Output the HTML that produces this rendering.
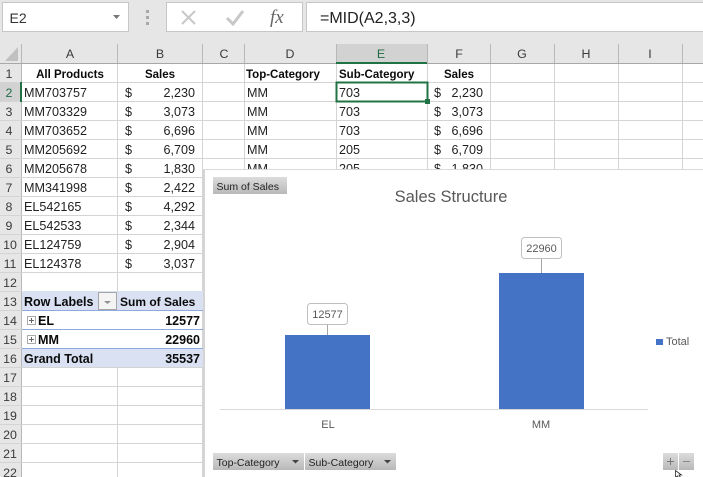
<!DOCTYPE html>
<html><head><meta charset="utf-8"><style>
html,body{margin:0;padding:0;background:#fff}
svg{display:block}
text{font-family:"Liberation Sans",sans-serif;font-size:12.6px;fill:#1f1f1f}
.b{font-weight:bold;fill:#0a0a0a}
.h{fill:#3a3a3a;font-size:12.4px}
.m{text-anchor:middle}
.r{text-anchor:end}
.c{fill:#595959;font-size:11px}
.f{font-size:10.5px;fill:#222}
</style></head><body>
<svg width="703" height="477" viewBox="0 0 703 477" xmlns="http://www.w3.org/2000/svg" shape-rendering="crispEdges">
<defs><linearGradient id="g" x1="0" y1="0" x2="0" y2="1"><stop offset="0" stop-color="#dcdcdc"/><stop offset="1" stop-color="#b8b8b8"/></linearGradient></defs>
<rect width="703" height="477" fill="#fff"/>
<rect width="703" height="64" fill="#e6e6e6"/>
<rect x="0" y="64" width="21" height="413" fill="#e6e6e6"/>
<!-- name/formula boxes -->
<rect x="2.500" y="2.500" width="126" height="29" fill="#fff" stroke="#c6c6c6"/>
<text x="9.500" y="23" style="font-size:14px;fill:#333">E2</text>
<path d="M113 15h7l-3.500 4z" fill="#777" shape-rendering="auto"/>
<rect x="146" y="10" width="3" height="3" fill="#a8a8a8"/><rect x="146" y="16" width="3" height="3" fill="#a8a8a8"/><rect x="146" y="22" width="3" height="3" fill="#a8a8a8"/>
<rect x="166.500" y="2.500" width="136" height="29" fill="#fff" stroke="#c6c6c6"/>
<path d="M182 11l13 13M195 11l-13 13" stroke="#c8c8c8" stroke-width="2" fill="none" shape-rendering="auto"/>
<path d="M227 18l6 6 10-13" stroke="#c8c8c8" stroke-width="3" fill="none" shape-rendering="auto"/>
<text x="270" y="23" style="font-family:'Liberation Serif',serif;font-style:italic;font-size:19px;fill:#666">fx</text>
<rect x="306.500" y="2.500" width="398" height="29" fill="#fff" stroke="#c6c6c6"/>
<text x="320" y="23" style="font-size:16px;fill:#222">=MID(A2,3,3)</text>
<!-- headers -->
<rect x="336" y="44" width="91" height="19" fill="#d2d2d2"/>
<rect x="0" y="82" width="21" height="20" fill="#d2d2d2"/>
<path d="M18 47v14h-13z" fill="#c0c0c0" shape-rendering="auto"/>
<path d="M21.500 44v433M117.500 44v19M202.500 44v19M244.500 44v19M336.500 44v19M427.500 44v19M490.500 44v19M554.500 44v19M618.500 44v19M682.500 44v19" stroke="#b8b8b8" fill="none"/>
<rect x="0" y="63" width="703" height="1" fill="#a8a8a8"/>
<!-- grid -->
<path d="M0 82.500H703M0 101.500H703M0 120.500H703M0 139.500H703M0 158.500H703M0 177.500H703M0 196.500H703M0 215.500H703M0 234.500H703M0 253.500H703M0 272.500H703M0 291.500H703M0 310.500H703M0 329.500H703M0 348.500H703M0 367.500H703M0 386.500H703M0 405.500H703M0 424.500H703M0 443.500H703M0 462.500H703" stroke="#d4d4d4" fill="none"/>
<path d="M117.500 64V291M117.500 367V477M202.500 64V477M244.500 64V170M336.500 64V170M427.500 64V170M490.500 64V170M554.500 64V170M618.500 64V170M682.500 64V170" stroke="#d4d4d4" fill="none"/>
<!-- pivot -->
<rect x="22" y="291" width="181" height="19" fill="#d9e1f2"/>
<rect x="22" y="348" width="181" height="19" fill="#d9e1f2"/>
<path d="M22 310.500H203M22 329.500H203M22 348.500H203" stroke="#8ea9db" fill="none"/>
<rect x="98.500" y="292.500" width="18" height="17" fill="#f4f4f4" stroke="#a6a6a6"/>
<path d="M104 301h7l-3.500 3z" fill="#909090" shape-rendering="auto"/>
<rect x="27.500" y="316.500" width="8" height="8" fill="#fff" stroke="#aaa"/><path d="M29 320.500h5M31.500 318v5" stroke="#666"/>
<rect x="27.500" y="335.500" width="8" height="8" fill="#fff" stroke="#aaa"/><path d="M29 339.500h5M31.500 337v5" stroke="#666"/>
<!-- header text -->
<g class="h">
<text class="h m" x="70" y="58">A</text><text class="h m" x="160" y="58">B</text><text class="h m" x="224" y="58">C</text><text class="h m" x="290" y="58">D</text><text class="h m" x="381" y="58" style="fill:#1f6b45">E</text><text class="h m" x="459" y="58">F</text><text class="h m" x="522" y="58">G</text><text class="h m" x="586" y="58">H</text><text class="h m" x="650" y="58">I</text>
</g>
<g>
<text class="h m" x="9" y="78">1</text><text class="h m" x="9" y="97" style="fill:#1f6b45">2</text><text class="h m" x="9" y="116">3</text><text class="h m" x="9" y="135">4</text><text class="h m" x="9" y="154">5</text><text class="h m" x="9" y="173">6</text><text class="h m" x="9" y="192">7</text><text class="h m" x="9" y="211">8</text><text class="h m" x="9" y="230">9</text><text class="h m" x="10" y="249">10</text><text class="h m" x="10" y="268">11</text><text class="h m" x="10" y="287">12</text><text class="h m" x="10" y="306">13</text><text class="h m" x="10" y="325">14</text><text class="h m" x="10" y="344">15</text><text class="h m" x="10" y="363">16</text><text class="h m" x="10" y="382">17</text><text class="h m" x="10" y="401">18</text><text class="h m" x="10" y="420">19</text><text class="h m" x="10" y="439">20</text><text class="h m" x="10" y="458">21</text><text class="h m" x="10" y="477">22</text>
</g>
<!-- col A/B -->
<text class="b m" x="70" y="78" style="font-size:11.500px">All Products</text>
<text class="b m" x="160" y="78" style="font-size:11.500px">Sales</text>
<text x="24" y="97">MM703757</text><text x="125" y="97">$</text><text class="r" x="195" y="97">2,230</text>
<text x="24" y="116">MM703329</text><text x="125" y="116">$</text><text class="r" x="195" y="116">3,073</text>
<text x="24" y="135">MM703652</text><text x="125" y="135">$</text><text class="r" x="195" y="135">6,696</text>
<text x="24" y="154">MM205692</text><text x="125" y="154">$</text><text class="r" x="195" y="154">6,709</text>
<text x="24" y="173">MM205678</text><text x="125" y="173">$</text><text class="r" x="195" y="173">1,830</text>
<text x="24" y="192">MM341998</text><text x="125" y="192">$</text><text class="r" x="195" y="192">2,422</text>
<text x="24" y="211">EL542165</text><text x="125" y="211">$</text><text class="r" x="195" y="211">4,292</text>
<text x="24" y="230">EL542533</text><text x="125" y="230">$</text><text class="r" x="195" y="230">2,344</text>
<text x="24" y="249">EL124759</text><text x="125" y="249">$</text><text class="r" x="195" y="249">2,904</text>
<text x="24" y="268">EL124378</text><text x="125" y="268">$</text><text class="r" x="195" y="268">3,037</text>
<!-- pivot text -->
<text class="b" x="24" y="306" style="font-size:12.500px">Row Labels</text>
<text class="b" x="120" y="306" style="font-size:12px">Sum of Sales</text>
<text class="b" x="38" y="325">EL</text><text class="b r" x="200" y="325" style="font-size:12.500px">12577</text>
<text class="b" x="38" y="344">MM</text><text class="b r" x="200" y="344" style="font-size:12.500px">22960</text>
<text class="b" x="24" y="363" style="font-size:12.500px">Grand Total</text><text class="b r" x="200" y="363" style="font-size:12.500px">35537</text>
<!-- D/E/F -->
<text class="b" x="246" y="78" style="font-size:11.500px">Top-Category</text>
<text class="b" x="339" y="78" style="font-size:11.500px">Sub-Category</text>
<text class="b m" x="459" y="78" style="font-size:11.500px">Sales</text>
<text x="247" y="97">MM</text><text x="339" y="97">703</text><text x="434" y="97">$</text><text class="r" x="483" y="97">2,230</text>
<text x="247" y="116">MM</text><text x="339" y="116">703</text><text x="434" y="116">$</text><text class="r" x="483" y="116">3,073</text>
<text x="247" y="135">MM</text><text x="339" y="135">703</text><text x="434" y="135">$</text><text class="r" x="483" y="135">6,696</text>
<text x="247" y="154">MM</text><text x="339" y="154">205</text><text x="434" y="154">$</text><text class="r" x="483" y="154">6,709</text>
<text x="247" y="173">MM</text><text x="339" y="173">205</text><text x="434" y="173">$</text><text class="r" x="483" y="173">1,830</text>
<!-- selection -->
<rect x="20" y="82" width="2" height="20" fill="#217346"/>
<rect x="336" y="62" width="91" height="2" fill="#217346"/>
<rect x="336.500" y="82.500" width="91" height="19" fill="none" stroke="#217346" stroke-width="2"/>
<rect x="425" y="99" width="5" height="5" fill="#217346"/>
<!-- chart -->
<rect x="203" y="169" width="500" height="308" fill="#fff"/>
<rect x="203" y="169" width="2" height="308" fill="#d4d4d4"/>
<rect x="203" y="169" width="500" height="1" fill="#d9d9d9"/>
<rect x="213" y="177" width="74" height="17" fill="url(#g)"/>
<text class="f" x="216.500" y="190">Sum of Sales</text>
<text class="m" x="451" y="202" style="font-size:16.500px;fill:#595959">Sales Structure</text>
<rect x="220" y="409" width="428" height="1" fill="#d9d9d9"/>
<rect x="285" y="335" width="85" height="74" fill="#4472c4"/>
<rect x="499" y="273" width="85" height="136" fill="#4472c4"/>
<rect x="327" y="324" width="1" height="11" fill="#a6a6a6"/>
<rect x="541" y="258" width="1" height="15" fill="#a6a6a6"/>
<g shape-rendering="auto">
<rect x="307.500" y="303.500" width="40" height="21" rx="3" fill="#fff" stroke="#bfbfbf"/>
<rect x="521.500" y="237.500" width="40" height="21" rx="3" fill="#fff" stroke="#bfbfbf"/>
</g>
<text class="c m" x="327.500" y="318">12577</text>
<text class="c m" x="541.500" y="252">22960</text>
<text class="c m" x="328" y="428">EL</text>
<text class="c m" x="541" y="428">MM</text>
<rect x="656" y="339" width="7" height="6" fill="#4472c4"/>
<text class="c" x="666" y="345">Total</text>
<rect x="213" y="453" width="91" height="17" fill="url(#g)"/>
<rect x="305" y="453" width="91" height="17" fill="url(#g)"/>
<text class="f" x="216.500" y="466">Top-Category</text>
<text class="f" x="308.500" y="466">Sub-Category</text>
<path d="M292 460h7l-3.500 3.500zM384 460h7l-3.500 3.500z" fill="#444" shape-rendering="auto"/>
<rect x="663" y="453" width="15" height="17" fill="url(#g)"/>
<rect x="679" y="453" width="15" height="17" fill="url(#g)"/>
<path d="M667 461.500h7M670.500 458v7" stroke="#777" stroke-width="1" fill="none"/>
<path d="M683 461.500h7" stroke="#8a8a8a" stroke-width="1" fill="none"/>
<path d="M675.500 470.500v7l2-1.500 1 1.500h2l-1.500-2.500h2.500z" fill="#fff" stroke="#222" stroke-width="0.800" shape-rendering="auto"/>
</svg>
</body></html>
